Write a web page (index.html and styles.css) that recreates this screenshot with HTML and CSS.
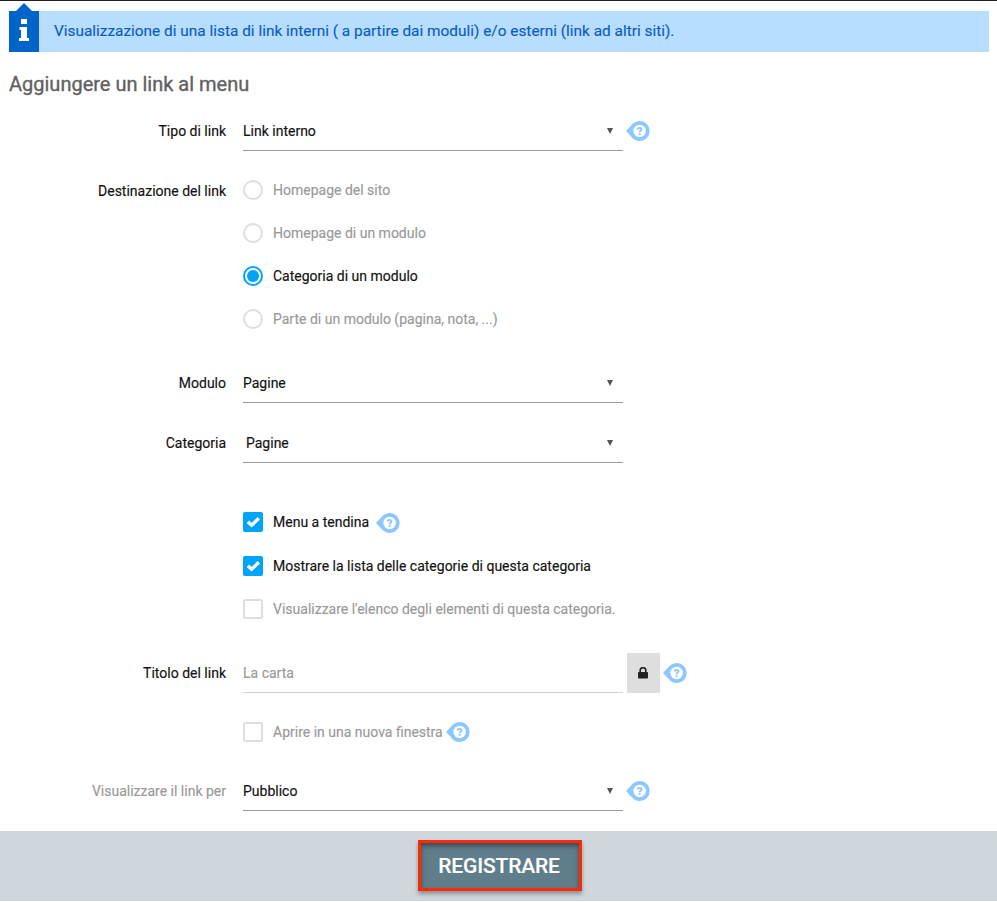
FILE: index.html
```html
<!DOCTYPE html>
<html lang="it">
<head>
<meta charset="utf-8">
<title>Aggiungere un link al menu</title>
<link rel="stylesheet" href="styles.css">
</head>
<body>
<svg class="symbols" width="0" height="0" aria-hidden="true">
  <symbol id="help" viewBox="0 0 24 20">
    <path fill="#8cc8ff" d="M0 10 7 2.6A10 10 0 1 1 7 17.4Z"/>
    <circle cx="13.6" cy="10" r="6.2" fill="#fff"/>
    <path d="M11.6 8.5C11.8 6.3 15.6 6.4 15.5 8.4C15.4 9.8 13.6 9.7 13.6 11.2M13.6 12.1V13.8" fill="none" stroke="#8cc8ff" stroke-width="1.9"/>
  </symbol>
  <symbol id="check" viewBox="0 0 20 20">
    <path d="M4.9 9.7 8.6 13.2 15.9 6.3" fill="none" stroke="#fff" stroke-width="3.4"/>
  </symbol>
</svg>
<header class="banner">
  <div class="banner-icon">
    <svg width="10" height="22" viewBox="0 0 10 22"><path fill="#fff" d="M2 0H8V5H2ZM.5 8H8V19H10V22H0V19H2V11H.5Z"/></svg>
  </div>
  <p class="banner-text"><span>Visualizzazione di una lista di link interni ( a partire dai moduli) e/o esterni (link ad altri siti).</span></p>
</header>
<main class="form">
  <h1 class="title"><span>Aggiungere un link al menu</span></h1>
  <div class="row type">
    <span class="label">Tipo di link</span>
    <div class="select">Link interno<i class="arrow"></i></div>
    <svg class="help"><use href="#help"/></svg>
  </div>
  <div class="row destination">
    <span class="label">Destinazione del link</span>
    <div class="options">
      <div class="option muted"><i class="radio"></i>Homepage del sito</div>
      <div class="option muted"><i class="radio"></i>Homepage di un modulo</div>
      <div class="option"><i class="radio selected"></i>Categoria di un modulo</div>
      <div class="option muted"><i class="radio"></i>Parte di un modulo (pagina, nota, ...)</div>
    </div>
  </div>
  <div class="row module">
    <span class="label">Modulo</span>
    <div class="select">Pagine<i class="arrow"></i></div>
  </div>
  <div class="row category">
    <span class="label">Categoria</span>
    <div class="select indented">Pagine<i class="arrow"></i></div>
  </div>
  <div class="row checks">
    <span class="label"></span>
    <div class="options">
      <div class="option first"><svg class="box checked"><use href="#check"/></svg>Menu a tendina<svg class="help spaced"><use href="#help"/></svg></div>
      <div class="option"><svg class="box checked"><use href="#check"/></svg>Mostrare la lista delle categorie di questa categoria</div>
      <div class="option muted"><i class="box"></i>Visualizzare l'elenco degli elementi di questa categoria.</div>
    </div>
  </div>
  <div class="row name">
    <span class="label">Titolo del link</span>
    <div class="select disabled">La carta</div>
    <div class="lock"><svg width="10" height="12" viewBox="0 0 10 12"><path d="M2.2 6V3.5a2.8 2.8 0 0 1 5.6 0V6" fill="none" stroke="#222" stroke-width="1.6"/><rect y="5" width="10" height="6.5" rx=".8" fill="#222"/></svg></div>
    <svg class="help"><use href="#help"/></svg>
  </div>
  <div class="row window">
    <span class="label"></span>
    <div class="option muted"><i class="box"></i>Aprire in una nuova finestra<svg class="help"><use href="#help"/></svg></div>
  </div>
  <div class="row audience">
    <span class="label muted">Visualizzare il link per</span>
    <div class="select">Pubblico<i class="arrow"></i></div>
    <svg class="help"><use href="#help"/></svg>
  </div>
</main>
<footer class="footer"><button class="save">REGISTRARE</button></footer>
</body>
</html>
```
FILE: styles.css
```css
* { box-sizing: border-box; }
body { margin: 0; height: 902px; border-top: 1px solid #231f20; background: #fff; color: #111; font: 14px/20px Roboto, sans-serif; -webkit-text-stroke: .15px; overflow: hidden; }
.symbols { position: absolute; }
.banner { display: flex; height: 41px; margin: 10px 8px 0 9px; background: #b7deff; color: #0d5bc6; }
.banner-icon { position: relative; display: flex; justify-content: center; width: 30px; padding-top: 8px; background: #0064c8; }
.banner-icon::before { content: ""; position: absolute; top: -8px; left: 7px; border: solid transparent; border-width: 0 8px 8px; border-bottom-color: #0064c8; }
.banner-text { margin: 0; padding: 10px 15px; font-size: 15.4px; }
.title { margin: 0 0 0 9px; height: 59px; padding-top: 20px; color: #616161; font-size: 20px; line-height: 24px; font-weight: 400; -webkit-text-stroke: .35px; }
.row { display: flex; align-items: flex-start; height: 40px; }
.label { width: 226px; margin-right: 17px; line-height: 40px; text-align: right; flex: none; }
.muted { color: #999; }
.select { display: flex; align-items: center; justify-content: space-between; width: 380px; height: 40px; padding-right: 10px; border-bottom: 1px solid #9b9b9b; }
.indented { padding-left: 3px; }
.disabled { color: #999; border-color: #d0d0d0; }
.arrow { border: solid transparent; border-width: 6px 3.5px 0; border-top-color: #555; }
.help { width: 24px; height: 20px; margin: 10px 0 0 3px; flex: none; }
.option { display: flex; align-items: center; height: 43px; }
.option .help { margin: 0 0 0 3.5px; }
.option .spaced { margin: 2px 0 0 7px; }
.radio { width: 20px; height: 20px; margin-right: 10px; border: 2px solid #dedede; border-radius: 50%; }
.radio.selected { border-color: #00a5fa; padding: 2px; background: #00a5fa content-box; }
.box { width: 20px; height: 20px; margin-right: 10px; border: 2px solid #dedede; border-radius: 2px; flex: none; }
.box.checked { border: 0; background: #00a5fa; }
.destination { height: 172px; margin-top: 17px; }
.destination .label { margin-top: 3px; }
.module { margin-top: 23px; }
.category { margin-top: 20px; }
.checks { height: 130px; margin-top: 37px; }
.checks .first { height: 44px; }
.name { margin-top: 23px; }
.lock { display: flex; align-items: center; justify-content: center; width: 33px; height: 40px; margin-left: 4px; padding-right: 1px; background: #dedede; }
.window { height: 43px; margin-top: 17px; }
.audience { margin-top: 18px; }
.footer { display: flex; justify-content: center; height: 70px; margin-top: 20px; padding: 9px 0 0 2px; background: #cfd6dc; }
.save { width: 164px; height: 51px; padding: 0 1px 0 0; border: 3px solid #ff2a00; background: #607d8b; color: #fff; font: 500 21px/42px Roboto, sans-serif; letter-spacing: -.15px; box-shadow: 0 3px 4px #0005, inset 0 3px 5px #0006; }
```
